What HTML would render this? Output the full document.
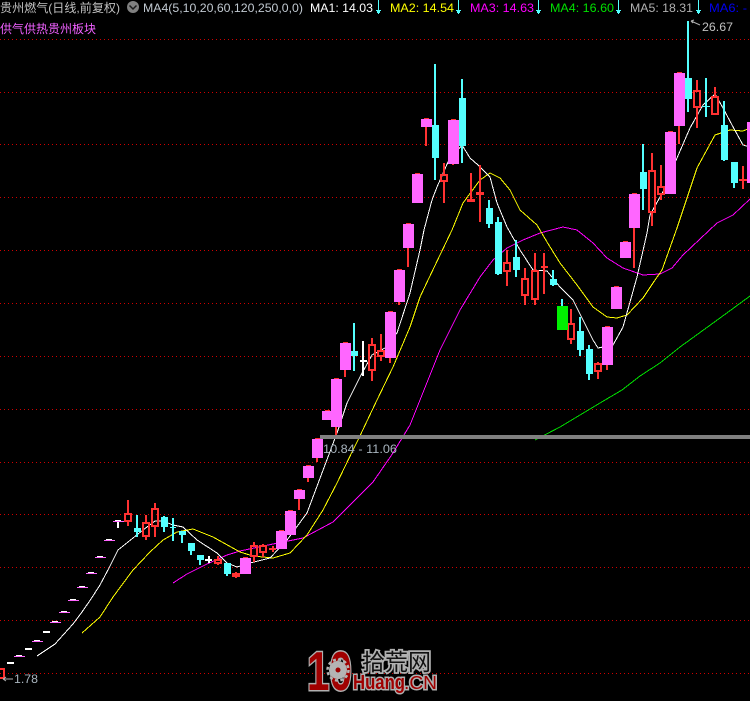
<!DOCTYPE html>
<html><head><meta charset="utf-8"><title>贵州燃气</title>
<style>
html,body{margin:0;padding:0;background:#000;width:750px;height:701px;overflow:hidden}
svg{display:block;position:absolute;left:0;top:0}
text{font-family:"Liberation Sans","Noto Sans CJK SC",sans-serif;font-size:12px}
.c{fill:#54ffff}.p{fill:#ff66ff}.r{fill:#ff3232}.w{fill:#fff}
.h rect{fill:none;stroke:#ff3232;stroke-width:2}
</style></head><body>
<svg width="750" height="701" viewBox="0 0 750 701">
<rect width="750" height="701" fill="#000"/>
<g stroke="#d00000" stroke-width="1" stroke-dasharray="1 3" shape-rendering="crispEdges">
<path d="M0 39.5H750M0 92.5H750M0 144.5H750M0 197.5H750M0 250.5H750M0 303.5H750M0 356.5H750M0 409.5H750M0 462.5H750M0 514.5H750M0 567.5H750M0 620.5H750M0 673.5H750"/>
</g>
<g fill="none" stroke-width="1" shape-rendering="crispEdges">
<polyline stroke="#00e000" points="535,440 560,427 580,415 600,403 622,390 640,376 660,363 680,347 720,318 750,296"/>
<polyline stroke="#ff00ff" points="173,583 187,574 207,564 227,555 240,551 273,544 303,538 333,522 373,482 393,453 410,425 428,380 440,350 460,310 480,277 493,260 507,248 523,240 540,233 563,227 577,230 593,243 607,258 623,268 643,275 660,274 672,268 683,255 717,223 733,215 750,199"/>
<polyline stroke="#ffff00" points="82,633 100,617 113,597 133,570 150,552 163,540 177,532 193,529 213,537 240,552 253,556 273,558 290,553 307,535 323,510 337,483 353,450 358,440 377,400 393,367 410,327 420,297 429,278 452,230 463,203 480,180 490,173 500,178 510,190 520,210 537,225 547,242 560,263 577,285 593,307 607,317 617,318 627,315 643,298 653,283 662,270 677,228 697,168 715,135 730,130 743,131 750,128"/>
<polyline stroke="#ffffff" points="37,656 46,650 55,644 64,634 73,624 82,612 91,599 100,585 109,568 118,550 128,542 133,538 143,530 155,521 163,521 173,525 183,527 197,540 217,553 227,563 237,567 250,563 270,558 287,540 307,513 337,433 347,403 360,377 372,355 385,348 397,333 410,293 420,250 424,230 432,200 437,187 448,162 462,145 470,158 478,165 490,177 497,203 507,227 520,250 533,270 547,271 560,287 573,300 583,320 593,340 598,348 613,345 623,327 637,277 647,233 650,215 665,188 677,158 690,128 703,105 715,94 723,108 732,125 743,145 750,147"/>
</g>
<g shape-rendering="crispEdges">
<!-- limit-up bars -->
<rect class="w" x="7" y="662" width="7" height="2"/><rect class="w" x="25" y="648" width="7" height="2"/><rect class="w" x="43" y="631" width="7" height="2"/>
<path class="p" d="M14 656h11v1h-11zM32 641h11v1h-11zM50 622h11v1h-11zM59 612h11v1h-11zM68 600h11v1h-11zM77 587h11v1h-11zM86 573h11v1h-11zM95 557h11v1h-11zM104 540h11v1h-11zM113 521h11v1h-11z"/>
<path class="w" d="M16 655h6v1h-6zM34 640h6v1h-6zM52 621h6v1h-6zM61 611h6v1h-6zM70 599h6v1h-6zM79 586h6v1h-6zM88 572h6v1h-6zM97 556h6v1h-6zM106 539h6v1h-6zM115 520h6v1h-6zM117 522h2v6h-2z"/>
<!-- white dojis -->
<path class="w" d="M208 556h2v7h-2zM205 559h7v2h-7zM362 341h2v35h-2zM360 360h7v2h-7z"/>
<!-- red wicks -->
<path class="r" d="M127 500h2v13h-2zM127 522h2v4h-2zM145 515h2v7h-2zM145 537h2v3h-2zM154 503h2v5h-2zM154 527h2v10h-2zM217 556h2v3h-2zM217 564h2v1h-2zM232 573h8v4h-8zM235 572h2v6h-2zM253 542h2v3h-2zM253 557h2v5h-2zM262 544h2v1h-2zM262 553h2v4h-2zM269 548h7v2h-7zM272 546h2v6h-2zM298 499h2v11h-2zM307 478h2v4h-2zM316 458h2v4h-2zM335 427h2v9h-2zM344 370h2v7h-2zM371 338h2v6h-2zM371 371h2v10h-2zM380 334h2v16h-2zM380 357h2v4h-2zM389 358h2v5h-2zM398 302h2v3h-2zM407 248h2v19h-2zM425 127h2v19h-2zM443 163h2v11h-2zM443 182h2v21h-2zM452 164h2v1h-2zM470 173h2v27h-2zM467 199h8v3h-8zM479 165h2v57h-2zM476 192h8v3h-8zM506 250h2v12h-2zM506 272h2v14h-2zM524 268h2v10h-2zM524 296h2v9h-2zM534 253h2v17h-2zM534 300h2v5h-2zM543 253h2v41h-2zM541 266h7v2h-7zM570 309h2v14h-2zM570 340h2v4h-2zM597 362h2v1h-2zM597 372h2v7h-2zM606 365h2v5h-2zM633 228h2v40h-2zM651 153h2v17h-2zM651 213h2v13h-2zM660 165h2v21h-2zM660 195h2v5h-2zM678 126h2v18h-2zM696 80h2v10h-2zM696 108h2v20h-2zM714 87h2v9h-2zM742 166h2v23h-2zM739 179h8v2h-8z"/>
<!-- red hollow -->
<g class="h">
<rect x="-1" y="669" width="5" height="9"/>
<rect x="125" y="514" width="6" height="7"/>
<rect x="143" y="523" width="6" height="13"/>
<rect x="152" y="509" width="6" height="17"/>
<rect x="215" y="560" width="6" height="3"/>
<rect x="251" y="546" width="6" height="10"/>
<rect x="260" y="546" width="6" height="6"/>
<rect x="369" y="345" width="6" height="25"/>
<rect x="378" y="351" width="6" height="5"/>
<rect x="441" y="175" width="6" height="6"/>
<rect x="504" y="263" width="6" height="8"/>
<rect x="522" y="279" width="6" height="16"/>
<rect x="532" y="271" width="6" height="28"/>
<rect x="568" y="324" width="6" height="15"/>
<rect x="595" y="364" width="6" height="7"/>
<rect x="649" y="171" width="6" height="41"/>
<rect x="658" y="187" width="6" height="7"/>
<rect x="694" y="91" width="6" height="16"/>
<rect x="712" y="97" width="6" height="17"/>
</g>
<!-- cyan -->
<path class="c" d="M136 515h2v22h-2zM134 528h7v4h-7zM161 517h7v10h-7zM163 516h2v16h-2zM172 518h2v23h-2zM170 527h6v1h-6zM179 531h7v4h-7zM181 531h2v12h-2zM188 543h7v8h-7zM190 551h2v4h-2zM197 555h7v5h-7zM199 560h2v5h-2zM224 563h7v11h-7zM226 574h2v2h-2zM353 323h2v48h-2zM351 351h7v5h-7zM434 64h2v116h-2zM432 125h7v33h-7zM461 79h2v84h-2zM459 98h7v48h-7zM486 208h7v16h-7zM488 200h2v28h-2zM495 222h7v52h-7zM497 217h2v58h-2zM513 257h7v13h-7zM515 240h2v37h-2zM550 279h7v6h-7zM552 270h2v16h-2zM561 299h2v7h-2zM577 331h7v19h-7zM579 317h2v39h-2zM586 349h7v25h-7zM588 345h2v35h-2zM640 172h7v17h-7zM642 144h2v66h-2zM685 78h7v21h-7zM687 21h2v91h-2zM705 78h2v39h-2zM702 106h8v1h-8zM721 125h7v35h-7zM723 101h2v60h-2zM731 162h7v21h-7zM733 183h2v5h-2z"/>
<rect x="557" y="306" width="11" height="24" fill="#00f000"/>
<!-- pink -->
<path class="p" d="M240 558h11v16h-11zM276 531h11v18h-11zM285 511h11v24h-11zM294 490h11v9h-11zM303 466h11v12h-11zM312 439h11v19h-11zM322 411h11v9h-11zM331 379h11v48h-11zM340 343h11v27h-11zM385 312h11v46h-11zM394 270h11v32h-11zM403 224h11v24h-11zM412 174h11v29h-11zM421 119h11v8h-11zM448 120h11v44h-11zM602 327h11v38h-11zM611 287h11v22h-11zM620 242h11v16h-11zM629 194h11v34h-11zM665 132h11v62h-11zM674 73h11v53h-11zM747 122h3v61h-3z"/>
<!-- caps -->
<path class="r" d="M243 557h5v1h-5zM279 530h5v1h-5zM288 510h5v1h-5zM297 489h5v1h-5zM306 465h5v1h-5zM315 438h5v1h-5zM325 410h5v1h-5zM334 378h5v1h-5zM343 342h5v1h-5zM388 311h5v1h-5zM397 269h5v1h-5zM406 223h5v1h-5zM415 173h5v1h-5zM424 118h5v1h-5zM451 119h5v1h-5zM605 326h5v1h-5zM614 286h5v1h-5zM623 241h5v1h-5zM632 193h5v1h-5zM668 131h5v1h-5zM677 72h5v1h-5z"/>
<rect x="320" y="435" width="430" height="4" fill="#808080"/>
</g>
<text x="323" y="453" fill="#a8b4be" textLength="74" lengthAdjust="spacingAndGlyphs">10.84 - 11.06</text>
<!-- header -->
<text x="0" y="12" fill="#c0c0c0" textLength="120" lengthAdjust="spacingAndGlyphs">贵州燃气(日线,前复权)</text>
<circle cx="133" cy="7" r="6" fill="#808080"/>
<path d="M129.500 5.500L133 9L136.500 5.500" fill="none" stroke="#1a1a1a" stroke-width="1.500"/>
<text x="143" y="12" fill="#c0c8d0" textLength="160" lengthAdjust="spacingAndGlyphs">MA4(5,10,20,60,120,250,0,0)</text>
<text x="310" y="12" fill="#fff" textLength="63" lengthAdjust="spacingAndGlyphs">MA1: 14.03</text>
<text x="390" y="12" fill="#ffff00" textLength="64" lengthAdjust="spacingAndGlyphs">MA2: 14.54</text>
<text x="470" y="12" fill="#ff00ff" textLength="64" lengthAdjust="spacingAndGlyphs">MA3: 14.63</text>
<text x="550" y="12" fill="#00e000" textLength="64" lengthAdjust="spacingAndGlyphs">MA4: 16.60</text>
<text x="630" y="12" fill="#b0b0b0" textLength="63" lengthAdjust="spacingAndGlyphs">MA5: 18.31</text>
<text x="709" y="12" fill="#0000f0" textLength="38" lengthAdjust="spacingAndGlyphs">MA6: -</text>
<g fill="#54ffff" shape-rendering="crispEdges">
<path d="M378 0h1v14h-1zM376 10h5v1h-5zM377 11h3v2h-3zM458 0h1v14h-1zM456 10h5v1h-5zM457 11h3v2h-3zM538 0h1v14h-1zM536 10h5v1h-5zM537 11h3v2h-3zM618 0h1v14h-1zM616 10h5v1h-5zM617 11h3v2h-3zM698 0h1v14h-1zM696 10h5v1h-5zM697 11h3v2h-3z"/>
</g>
<text x="0" y="33" fill="#f060ff" textLength="96" lengthAdjust="spacingAndGlyphs">供气供热贵州板块</text>
<!-- high / low labels -->
<path d="M691 21L700 25M691 21l3-1M691 21l2 2" stroke="#b0b0b0" stroke-width="1" fill="none"/>
<text x="702" y="31" fill="#c0c0c0" textLength="31" lengthAdjust="spacingAndGlyphs">26.67</text>
<path d="M3 679H13M3 679l3-2M3 679l3 2" stroke="#b0b0b0" stroke-width="1" fill="none"/>
<text x="14" y="683" fill="#a8b4be" textLength="24" lengthAdjust="spacingAndGlyphs">1.78</text>
<!-- logo -->
<text x="307" y="690" textLength="45" lengthAdjust="spacingAndGlyphs" style="font-size:55px;font-weight:bold;paint-order:stroke" fill="#a00000" stroke="#b0b0b0" stroke-width="3">10</text>
<circle cx="338" cy="670" r="9" fill="#b4b4b4"/>
<circle cx="338" cy="670" r="10.500" fill="none" stroke="#b4b4b4" stroke-width="2.500" stroke-dasharray="3 2.500"/>
<circle cx="338" cy="670" r="2.500" fill="#a00000"/>
<text x="362" y="670" style="font-size:23px;paint-order:stroke" fill="#111" stroke="#b0b0b0" stroke-width="3.500">拾荒网</text>
<text x="353" y="689" textLength="52" lengthAdjust="spacingAndGlyphs" style="font-size:20px;font-weight:bold;paint-order:stroke" fill="#a00000" stroke="#b0b0b0" stroke-width="3">Huang</text>
<text x="404" y="689" textLength="33" lengthAdjust="spacingAndGlyphs" style="font-size:18px;paint-order:stroke" fill="#a00000" stroke="#b0b0b0" stroke-width="3">.CN</text>
</svg>
</body></html>
